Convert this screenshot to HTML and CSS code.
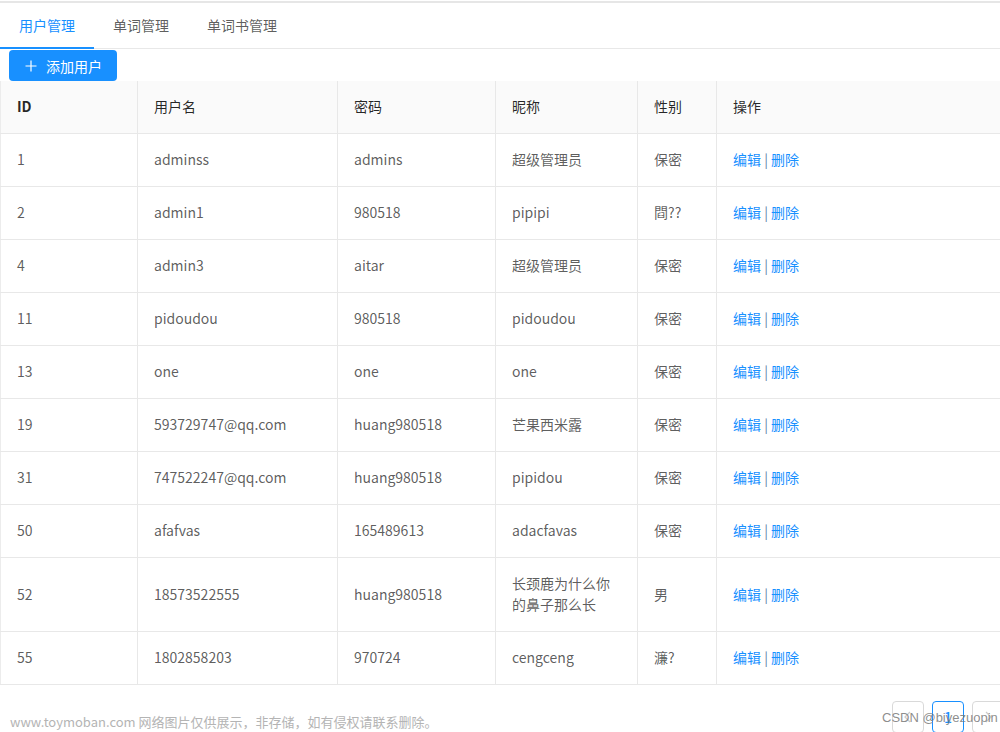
FILE: index.html
```html
<!DOCTYPE html>
<html lang="zh-CN">
<head>
<meta charset="utf-8">
<title>用户管理</title>
<link rel="stylesheet" href="styles.css">
</head>
<body>
<div class="page">
  <div class="topline"></div>
  <div class="tabs">
    <div class="tab active">用户管理</div>
    <div class="tab">单词管理</div>
    <div class="tab">单词书管理</div>
  </div>
  <div class="toolbar">
    <button class="btn-primary">
      <svg class="plus" width="12" height="12" viewBox="0 0 12 12"><path d="M6 0.5V11.5M0.5 6H11.5" stroke="#fff" stroke-width="1.2" fill="none"/></svg>
      <span>添加用户</span>
    </button>
  </div>
  <table class="grid">
    <colgroup>
      <col class="c-id"><col class="c-user"><col class="c-pwd"><col class="c-nick"><col class="c-sex"><col class="c-op">
    </colgroup>
    <thead>
      <tr><th class="th-id">ID</th><th>用户名</th><th>密码</th><th>昵称</th><th>性别</th><th>操作</th></tr>
    </thead>
    <tbody>
      <tr><td>1</td><td>adminss</td><td>admins</td><td>超级管理员</td><td>保密</td><td class="ops"><a>编辑</a> <span class="sep">|</span> <a>删除</a></td></tr>
      <tr><td>2</td><td>admin1</td><td>980518</td><td>pipipi</td><td>閰??</td><td class="ops"><a>编辑</a> <span class="sep">|</span> <a>删除</a></td></tr>
      <tr><td>4</td><td>admin3</td><td>aitar</td><td>超级管理员</td><td>保密</td><td class="ops"><a>编辑</a> <span class="sep">|</span> <a>删除</a></td></tr>
      <tr><td>11</td><td>pidoudou</td><td>980518</td><td>pidoudou</td><td>保密</td><td class="ops"><a>编辑</a> <span class="sep">|</span> <a>删除</a></td></tr>
      <tr><td>13</td><td>one</td><td>one</td><td>one</td><td>保密</td><td class="ops"><a>编辑</a> <span class="sep">|</span> <a>删除</a></td></tr>
      <tr><td>19</td><td>593729747@qq.com</td><td>huang980518</td><td>芒果西米露</td><td>保密</td><td class="ops"><a>编辑</a> <span class="sep">|</span> <a>删除</a></td></tr>
      <tr><td>31</td><td>747522247@qq.com</td><td>huang980518</td><td>pipidou</td><td>保密</td><td class="ops"><a>编辑</a> <span class="sep">|</span> <a>删除</a></td></tr>
      <tr><td>50</td><td>afafvas</td><td>165489613</td><td>adacfavas</td><td>保密</td><td class="ops"><a>编辑</a> <span class="sep">|</span> <a>删除</a></td></tr>
      <tr><td>52</td><td>18573522555</td><td>huang980518</td><td>长颈鹿为什么你的鼻子那么长</td><td>男</td><td class="ops"><a>编辑</a> <span class="sep">|</span> <a>删除</a></td></tr>
      <tr><td>55</td><td>1802858203</td><td>970724</td><td>cengceng</td><td>濂?</td><td class="ops"><a>编辑</a> <span class="sep">|</span> <a>删除</a></td></tr>
    </tbody>
  </table>
  <div class="pager">
    <div class="pg-item pg-disabled">
      <svg width="10" height="12" viewBox="0 0 10 12"><path d="M7 1L2 6L7 11" stroke="#ccc" stroke-width="1.3" fill="none"/></svg>
    </div>
    <div class="pg-item pg-active">1</div>
    <div class="pg-item pg-disabled">
      <svg width="10" height="12" viewBox="0 0 10 12"><path d="M3 1L8 6L3 11" stroke="#ccc" stroke-width="1.3" fill="none"/></svg>
    </div>
  </div>
  <div class="wm-left">www.toymoban.com 网络图片仅供展示，非存储，如有侵权请联系删除。</div>
  <div class="wm-right">CSDN @biyezuopin</div>
</div>
</body>
</html>
```

FILE: styles.css
```css
html, body {
  margin: 0;
  padding: 0;
  background: #fff;
  overflow: hidden;
}
body {
  font-family: "Noto Sans CJK SC", "Noto Sans", sans-serif;
  font-size: 14px;
  color: rgba(0, 0, 0, 0.65);
}
.page {
  position: relative;
  width: 1004px;
  height: 732px;
}
.topline {
  height: 3px;
  border-top: 1px solid #fff;
  box-sizing: border-box;
  background: #e6e6e6;
}
.tabs {
  display: flex;
  height: 45px;
  border-bottom: 1px solid #e8e8e8;
}
.tab {
  padding: 0 19px;
  height: 45px;
  line-height: 44px;
  box-sizing: border-box;
  color: rgba(0, 0, 0, 0.65);
}
.tab.active {
  color: #1890ff;
  border-bottom: 2px solid #1890ff;
  margin-bottom: -1px;
  height: 46px;
}
.toolbar {
  display: flex;
  padding: 1px 0 0 9px;
}
.btn-primary {
  display: flex;
  align-items: center;
  gap: 9px;
  height: 31px;
  padding: 0 15px 0 16px;
  border: none;
  border-radius: 4px;
  background: #1890ff;
  color: #fff;
  font-family: inherit;
  font-size: 14px;
  white-space: nowrap;
  box-sizing: border-box;
}
.plus {
  flex: none;
}
.grid {
  width: 100%;
  border-collapse: collapse;
  table-layout: fixed;
}
.c-id { width: 137px; }
.c-user { width: 200px; }
.c-pwd { width: 158px; }
.c-nick { width: 142px; }
.c-sex { width: 79px; }
.grid th, .grid td {
  border: 1px solid #e8e8e8;
  border-top: none;
  padding: 15px 16px 16px;
  line-height: 21px;
  text-align: left;
  vertical-align: middle;
  word-break: break-all;
}
.grid th:first-child, .grid td:first-child {
  border-left: 1px solid #ececec;
}
.grid th {
  background: #fafafa;
  font-weight: 400;
  color: rgba(0, 0, 0, 0.85);
}
.grid th.th-id {
  font-weight: 600;
}
.ops a {
  color: #1890ff;
}
.ops .sep {
  color: #5b7fa8;
}
.pager {
  display: flex;
  justify-content: flex-end;
  gap: 8px;
  margin-top: 16px;
}
.pg-item {
  width: 32px;
  height: 32px;
  box-sizing: border-box;
  border: 1px solid #d9d9d9;
  border-radius: 4px;
  display: flex;
  align-items: center;
  justify-content: center;
  color: rgba(0, 0, 0, 0.65);
}
.pg-active {
  border-color: #1890ff;
  color: #1890ff;
  font-weight: 500;
}
.wm-left {
  position: absolute;
  left: 10px;
  top: 713px;
  font-size: 13px;
  line-height: 18px;
  color: #b4b4b4;
}
.wm-right {
  position: absolute;
  left: 882px;
  top: 709px;
  font-family: "Liberation Sans", Arial, sans-serif;
  font-size: 13px;
  line-height: 18px;
  color: rgba(120, 120, 120, 0.85);
}
```
